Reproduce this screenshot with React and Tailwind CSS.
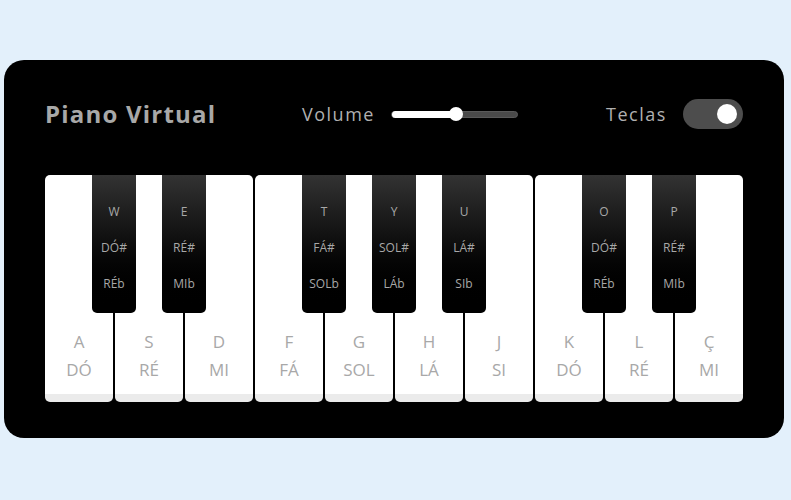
import React from "react";

const whites = [
  ["A", "DÓ"], ["S", "RÉ"], ["D", "MI"], ["F", "FÁ"], ["G", "SOL"],
  ["H", "LÁ"], ["J", "SI"], ["K", "DÓ"], ["L", "RÉ"], ["Ç", "MI"],
];

const blacks = [
  { left: 47, k: "W", a: "DÓ#", b: "RÉb" },
  { left: 117, k: "E", a: "RÉ#", b: "MIb" },
  { left: 257, k: "T", a: "FÁ#", b: "SOLb" },
  { left: 327, k: "Y", a: "SOL#", b: "LÁb" },
  { left: 397, k: "U", a: "LÁ#", b: "SIb" },
  { left: 537, k: "O", a: "DÓ#", b: "RÉb" },
  { left: 607, k: "P", a: "RÉ#", b: "MIb" },
];

const font = { fontFamily: "'Open Sans', sans-serif" };

export default function App() {
  return (
    <div className="w-[791px] h-[500px] bg-[#e3f0fb] pt-[60px] pl-[4px]" style={font}>
      <div className="w-[780px] h-[378px] bg-black rounded-[20px] px-[41px] pt-[38px]">
        <div className="flex items-center h-[32px]">
          <div className="w-[257px] text-[24px] font-bold text-[#a8a8a8] tracking-[1.2px]">Piano Virtual</div>
          <span className="w-[89px] text-[18px] text-[#b0b0b0] tracking-[1.5px]">Volume</span>
          <div className="relative w-[127px] h-[7px] rounded-full bg-[#4a4a4a] border border-[#5a5a5a]">
            <div className="absolute left-0 top-[-1px] h-[7px] w-[64px] rounded-full bg-white" />
            <div className="absolute left-[57px] top-[-5px] w-[14px] h-[14px] rounded-full bg-white" />
          </div>
          <div className="ml-auto flex items-center">
            <span className="w-[77px] text-[18px] text-[#b0b0b0] tracking-[1.5px]">Teclas</span>
            <div className="relative w-[60px] h-[30px] rounded-full bg-[#4d4d4d]">
              <div className="absolute right-[6px] top-[5px] w-[20px] h-[20px] rounded-full bg-white" />
            </div>
          </div>
        </div>
        <div className="relative mt-[45px] flex gap-[2px]">
          {whites.map(([k, n], i) => (
            <div
              key={i}
              className="w-[68px] h-[227px] bg-white rounded-[5px] border-b-[8px] border-[#ebebeb] flex flex-col items-center justify-end pb-[10px] text-[17px] leading-[28px] text-[#a8a8a8]"
            >
              <span>{k}</span>
              <span>{n}</span>
            </div>
          ))}
          {blacks.map((b, i) => (
            <div
              key={i}
              className="absolute top-0 w-[44px] h-[138px] rounded-b-[5px] bg-gradient-to-b from-[#333333] to-black flex flex-col items-center pt-[28px] gap-[19px] text-[12px] leading-[17px] text-[#a8a8a8]"
              style={{ left: b.left }}
            >
              <span>{b.k}</span>
              <span>{b.a}</span>
              <span>{b.b}</span>
            </div>
          ))}
        </div>
      </div>
    </div>
  );
}
